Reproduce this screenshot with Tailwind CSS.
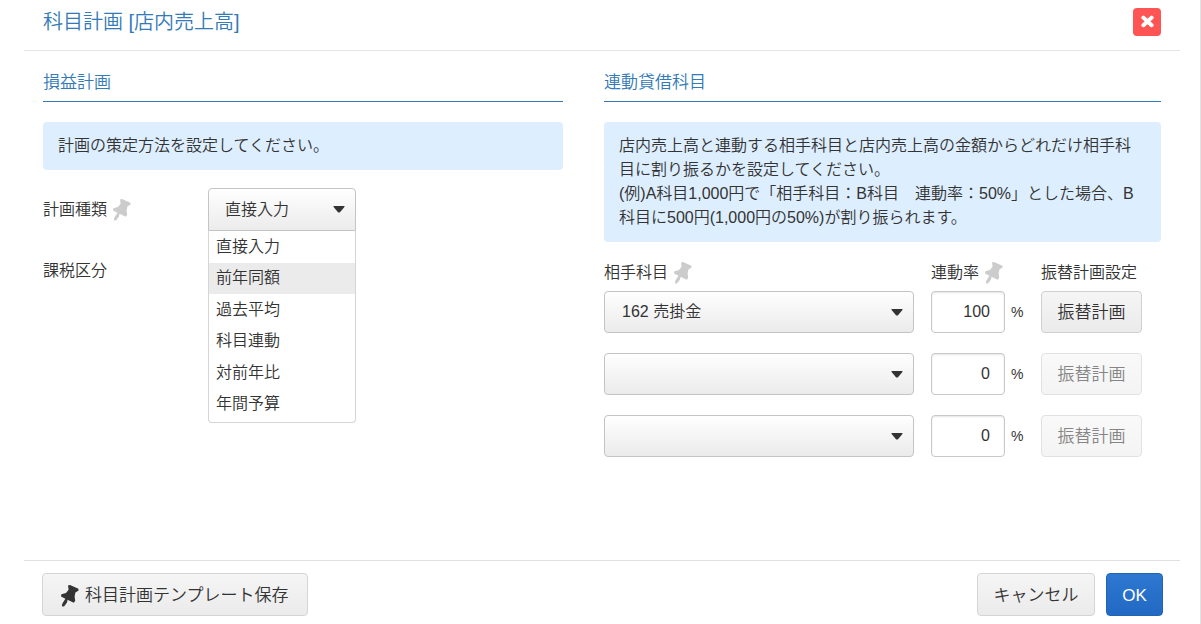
<!DOCTYPE html>
<html lang="ja">
<head>
  <meta charset="UTF-8">
  <meta name="viewport" content="width=device-width, initial-scale=1.0">
  <title>科目計画 [店内売上高]</title>
  <script src="https://cdn.jsdelivr.net/npm/@tailwindcss/browser@4"></script>
</head>
<body class="bg-white text-[#333] text-base font-[350] font-['Liberation_Sans','Noto_Sans_CJK_JP',sans-serif]">
  <!-- Shared icons -->
  <svg class="hidden">
    <symbol id="pin" viewBox="0 0 18 22">
      <path d="M7 0.6 L9 0 L17.4 3.8 L17.6 5.4 L14.4 7.6 L13.6 11.5 L14.2 15.8 L12.8 17.8 L8 15.4 L6.6 14.8 L6 17.6 L3 21.6 L0.8 21.2 L1.4 18.6 L4.4 13.8 L0 11.4 L0.4 9.2 L5 8 L7.6 4.8 Z"/>
    </symbol>
    <symbol id="caret" viewBox="0 0 12 7">
      <path d="M1 0 H11 Q12 0 11.4 1 L7 6.2 Q6 7 5 6.2 L0.6 1 Q0 0 1 0 Z"/>
    </symbol>
  </svg>

  <div class="flex flex-col min-h-screen pl-6 pr-5 border-r border-[#e2e2e2]">
    <!-- Header -->
    <header class="flex justify-between items-start px-[19px] pt-2 pb-3.5 border-b border-[#e5e5e5]">
      <h1 class="text-xl leading-7 text-[#337ab7]">科目計画 [店内売上高]</h1>
      <button type="button" aria-label="閉じる" class="flex items-center justify-center size-7 rounded bg-[#ff5454]">
        <svg class="size-[14px]" viewBox="0 0 14 14" fill="none" stroke="#fff" stroke-width="4" stroke-linecap="round">
          <path d="M3.4 2.6 L11.6 10.2 M11.6 2.6 L3.4 10.2"/>
        </svg>
      </button>
    </header>

    <main class="grid grid-cols-[520fr_557fr] gap-x-[41px] grow px-[19px] pt-5 pb-5">
      <!-- Profit and loss plan -->
      <section>
        <h2 class="text-[17px] leading-6 pb-1.5 border-b border-[#337ab7] text-[#337ab7]">損益計画</h2>
        <p class="mt-5 px-[15px] py-3 rounded bg-[#def]">計画の策定方法を設定してください。</p>

        <div class="flex items-center h-11 mt-[18px]">
          <label for="plan_type" class="w-[165px] flex items-center gap-1.5">計画種類
            <svg class="w-[18px] h-[22px] fill-[#ccc]"><use href="#pin"/></svg>
          </label>
          <div class="relative w-37">
            <select id="plan_type" class="appearance-none block w-full h-11 px-4 rounded-t border border-[#c4c4c4] bg-linear-to-b from-white to-[#ebebeb]">
              <option>直接入力</option>
              <option>前年同額</option>
              <option>過去平均</option>
              <option>科目連動</option>
              <option>対前年比</option>
              <option>年間予算</option>
            </select>
            <svg class="absolute right-[11px] top-[18px] w-3 h-[7px] fill-[#333] pointer-events-none"><use href="#caret"/></svg>
            <ul role="listbox" aria-label="計画種類" class="absolute left-0 top-[42px] w-full h-[193px] pb-0.5 grid grid-rows-6 items-stretch bg-white border border-[#d5d5d5] border-t-[#c4c4c4] rounded-b">
              <li role="option" class="flex items-center px-[7px]">直接入力</li>
              <li role="option" aria-selected="true" class="flex items-center px-[7px] bg-[#ebebeb]">前年同額</li>
              <li role="option" class="flex items-center px-[7px]">過去平均</li>
              <li role="option" class="flex items-center px-[7px]">科目連動</li>
              <li role="option" class="flex items-center px-[7px]">対前年比</li>
              <li role="option" class="flex items-center px-[7px]">年間予算</li>
            </ul>
          </div>
        </div>
        <div class="flex items-center h-11 mt-[17px]">課税区分</div>
      </section>

      <!-- Linked balance sheet accounts -->
      <section>
        <h2 class="text-[17px] leading-6 pb-1.5 border-b border-[#337ab7] text-[#337ab7]">連動貸借科目</h2>
        <p class="mt-5 px-[15px] py-3 rounded bg-[#def]">店内売上高と連動する相手科目と店内売上高の金額からどれだけ相手科目に割り振るかを設定してください。<br>(例)A科目1,000円で「相手科目：B科目　連動率：50%」とした場合、B科目に500円(1,000円の50%)が割り振られます。</p>

        <div class="grid grid-cols-[1fr_93px_101px] gap-x-[17px] pr-[19px] mt-[19px] mb-1.5">
          <div id="col_account" class="flex items-center gap-1.5">相手科目
            <svg class="w-[18px] h-[22px] fill-[#ccc]"><use href="#pin"/></svg>
          </div>
          <div id="col_rate" class="flex items-center gap-1.5">連動率
            <svg class="w-[18px] h-[22px] fill-[#ccc]"><use href="#pin"/></svg>
          </div>
          <div class="whitespace-nowrap">振替計画設定</div>
        </div>

        <div class="grid grid-cols-[1fr_93px_101px] gap-x-[17px] gap-y-5 pr-[19px]">
          <div class="relative">
            <select aria-labelledby="col_account" class="appearance-none block w-full h-[42px] px-[17px] rounded border border-[#c4c4c4] bg-linear-to-b from-white to-[#ebebeb]">
              <option>162 売掛金</option>
            </select>
            <svg class="absolute right-[11px] top-[18px] w-3 h-[7px] fill-[#333] pointer-events-none"><use href="#caret"/></svg>
          </div>
          <div class="flex items-center gap-1.5">
            <input type="text" value="100" aria-labelledby="col_rate" class="w-[74px] h-[42px] px-3.5 rounded border border-[#c8c8c8] bg-white text-right shadow-[inset_0_1px_2px_#0000001a]">
            <span class="text-sm">%</span>
          </div>
          <button type="button" class="h-[42px] pt-0.5 rounded border border-[#d0d0d0] bg-linear-to-b from-[#f5f5f5] to-[#ebebeb] text-[17px]">振替計画</button>

          <div class="relative">
            <select aria-labelledby="col_account" class="appearance-none block w-full h-[42px] px-[17px] rounded border border-[#c4c4c4] bg-linear-to-b from-white to-[#ebebeb]">
              <option></option>
            </select>
            <svg class="absolute right-[11px] top-[18px] w-3 h-[7px] fill-[#333] pointer-events-none"><use href="#caret"/></svg>
          </div>
          <div class="flex items-center gap-1.5">
            <input type="text" value="0" aria-labelledby="col_rate" class="w-[74px] h-[42px] px-3.5 rounded border border-[#c8c8c8] bg-white text-right shadow-[inset_0_1px_2px_#0000001a]">
            <span class="text-sm">%</span>
          </div>
          <button type="button" disabled class="h-[42px] pt-0.5 rounded border border-[#e2e2e2] bg-linear-to-b from-[#f9f9f9] to-[#f4f4f4] text-[17px] text-[#858585]">振替計画</button>

          <div class="relative">
            <select aria-labelledby="col_account" class="appearance-none block w-full h-[42px] px-[17px] rounded border border-[#c4c4c4] bg-linear-to-b from-white to-[#ebebeb]">
              <option></option>
            </select>
            <svg class="absolute right-[11px] top-[18px] w-3 h-[7px] fill-[#333] pointer-events-none"><use href="#caret"/></svg>
          </div>
          <div class="flex items-center gap-1.5">
            <input type="text" value="0" aria-labelledby="col_rate" class="w-[74px] h-[42px] px-3.5 rounded border border-[#c8c8c8] bg-white text-right shadow-[inset_0_1px_2px_#0000001a]">
            <span class="text-sm">%</span>
          </div>
          <button type="button" disabled class="h-[42px] pt-0.5 rounded border border-[#e2e2e2] bg-linear-to-b from-[#f9f9f9] to-[#f4f4f4] text-[17px] text-[#858585]">振替計画</button>
        </div>
      </section>
    </main>

    <!-- Footer -->
    <footer class="flex items-center pl-[18px] pr-[17px] pt-3 pb-2 border-t border-[#e0e0e0] text-[17px]">
      <button type="button" class="flex items-center gap-1.5 h-[43px] pt-0.5 px-[18px] rounded border border-[#d5d5d5] bg-linear-to-b from-[#f5f5f5] to-[#ebebeb]">
        <svg class="w-[18px] h-[22px] fill-[#333]"><use href="#pin"/></svg>科目計画テンプレート保存
      </button>
      <button type="button" class="ml-auto h-[43px] pt-0.5 w-[118px] rounded border border-[#d5d5d5] bg-linear-to-b from-[#f5f5f5] to-[#ebebeb]">キャンセル</button>
      <button type="button" class="ml-[11px] h-[43px] pt-0.5 w-[57px] rounded border border-[#2264b4] bg-linear-to-b from-[#2d78d0] to-[#2269c4] text-white">OK</button>
    </footer>
  </div>
</body>
</html>
